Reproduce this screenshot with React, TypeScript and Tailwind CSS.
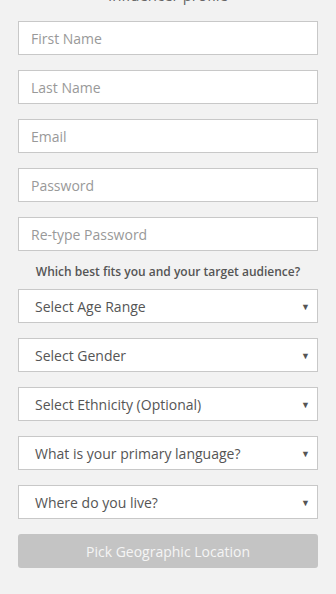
import React from 'react';

const inputs = ['First Name', 'Last Name', 'Email', 'Password', 'Re-type Password'];
const selects = [
  'Select Age Range',
  'Select Gender',
  'Select Ethnicity (Optional)',
  'What is your primary language?',
  'Where do you live?',
];

export default function App() {
  return (
    <div className="min-h-[594px] bg-[#f2f2f2] font-['Open_Sans',sans-serif] overflow-hidden">
      <div className="px-[18px] pb-6">
        {/* Title, scrolled mostly out of view */}
        <h1 className="-mt-[15px] mb-[15px] h-[21px] text-center text-[15px] leading-[21px] text-[#666]">Influencer profile</h1>

        {/* Account fields */}
        <div className="flex flex-col gap-[15px]">
          {inputs.map((label) => (
            <input
              key={label}
              type={label.includes('Password') ? 'password' : 'text'}
              placeholder={label}
              className="h-[34px] w-full border border-[#c8c8c8] bg-white px-3 text-[14px] text-[#555] placeholder:text-[#999] outline-none"
            />
          ))}
        </div>

        <p className="mt-[12px] mb-[9px] text-center text-[12px] font-semibold leading-[17px] text-[#555]">
          Which best fits you and your target audience?
        </p>

        {/* Audience selects */}
        <div className="flex flex-col gap-[15px]">
          {selects.map((label) => (
            <div
              key={label}
              className="flex h-[34px] items-center justify-between border border-[#c8c8c8] bg-white pl-4 pr-[7px] text-[14px] text-[#555]"
            >
              <span>{label}</span>
              <span className="text-[9px] leading-none text-[#555]">▼</span>
            </div>
          ))}
        </div>

        <button className="mt-[15px] h-[34px] w-full rounded-[3px] bg-[#c4c4c4] text-[14px] text-[#f5f5f5]">
          Pick Geographic Location
        </button>
      </div>
    </div>
  );
}
